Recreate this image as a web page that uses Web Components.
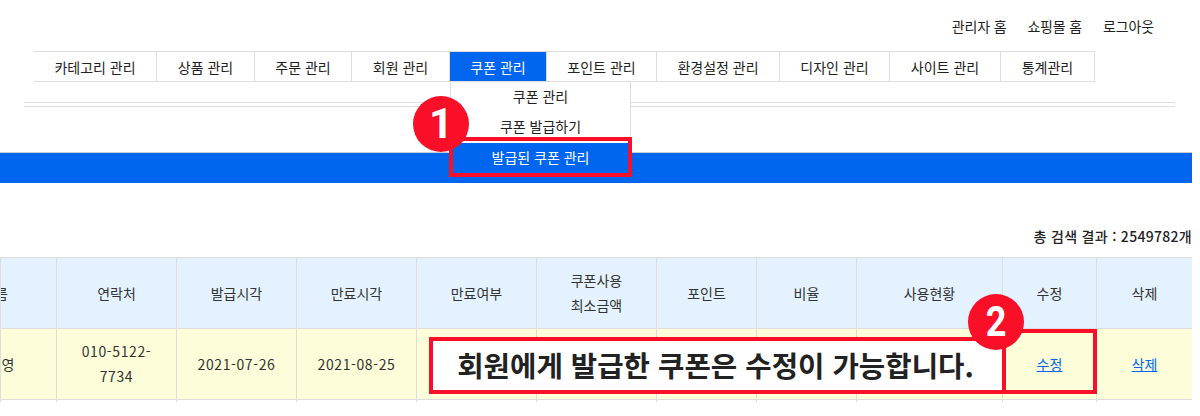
<!DOCTYPE html>
<html lang="ko">
<head>
<meta charset="utf-8">
<title>쿠폰 관리</title>
<style>
  html, body { margin: 0; background: #fff; }
  body { font-family: "Noto Sans CJK KR", "Noto Sans", sans-serif; font-size: 14px; color: #222; }
</style>
</head>
<body>
<admin-page>
  <top-links></top-links>
  <main-tabs></main-tabs>
  <double-rule></double-rule>
  <blue-bar></blue-bar>
  <result-count>총 검색 결과 : 2549782개</result-count>
  <coupon-table></coupon-table>
</admin-page>

<script>
class AdminPage extends HTMLElement {
  constructor() {
    super();
    const shadowRoot = this.attachShadow({ mode: 'open' });
    shadowRoot.innerHTML = `
      <style>
        :host {
          display: flex;
          flex-direction: column;
          position: relative;
          width: 1192px;
          height: 402px;
          overflow: hidden;
          background: #fff;
        }
        ::slotted(*) { flex: none; }
        .box {
          position: absolute;
          box-sizing: border-box;
          border: 4px solid #fa0f28;
        }
        .menu-box { left: 449px; top: 137px; width: 183px; height: 40px; }
        .edit-box { left: 1002px; top: 329px; width: 95px; height: 65px; }
        .note {
          left: 429px;
          top: 337px;
          width: 577px;
          height: 57px;
          padding-right: 4px;
          background: #fff;
          display: flex;
          align-items: center;
          justify-content: center;
          font-size: 28.7px;
          font-weight: 700;
          line-height: 1;
          color: #222;
          white-space: nowrap;
        }
        .badge {
          position: absolute;
          width: 56px;
          height: 56px;
          border-radius: 50%;
          background: #fa0f28;
          color: #fff;
          display: flex;
          align-items: center;
          justify-content: center;
          font-family: Roboto, "Noto Sans", sans-serif;
          font-size: 42px;
          font-weight: 700;
          line-height: 1;
        }
        .one { left: 413px; top: 96px; }
        .two { left: 968px; top: 294px; }
        .two span { transform: scaleX(.86); }
      </style>
      <slot></slot>
      <div class="box menu-box"></div>
      <div class="box edit-box"></div>
      <div class="box note">회원에게 발급한 쿠폰은 수정이 가능합니다.</div>
      <div class="badge one"><span>1</span></div>
      <div class="badge two"><span>2</span></div>
    `;
  }
}

class TopLinks extends HTMLElement {
  constructor() {
    super();
    const links = ['관리자 홈', '쇼핑몰 홈', '로그아웃'];
    const shadowRoot = this.attachShadow({ mode: 'open' });
    shadowRoot.innerHTML = `
      <style>
        :host {
          display: flex;
          justify-content: flex-end;
          gap: 21px;
          height: 51px;
          padding: 15px 38px 0 0;
          box-sizing: border-box;
          color: #222;
          font-size: 14px;
          letter-spacing: -.15px;
          line-height: 22px;
        }
      </style>
      ${links.map(t => `<span>${t}</span>`).join('')}
    `;
  }
}

class MainTabs extends HTMLElement {
  constructor() {
    super();
    this.items = [
      ['카테고리 관리', 123], ['상품 관리', 98], ['주문 관리', 97], ['회원 관리', 98], ['쿠폰 관리', 97],
      ['포인트 관리', 110], ['환경설정 관리', 123], ['디자인 관리', 110], ['사이트 관리', 111], ['통계관리', 94]
    ];
    const shadowRoot = this.attachShadow({ mode: 'open' });
    shadowRoot.innerHTML = `
      <style>
        :host {
          display: flex;
          height: 31px;
          padding-left: 34px;
          font-size: 14px;
          color: #222;
        }
        .tab {
          position: relative;
          box-sizing: border-box;
          height: 31px;
          border: 1px solid #ddd;
          border-left-width: 0;
          display: flex;
          align-items: center;
          justify-content: center;
          white-space: nowrap;
          background: #fff;
        }
        .tab:first-child { border-left-width: 1px; }
        .tab.on { background: #0066f0; color: #fff; }
        .drop {
          position: absolute;
          left: 0;
          top: 30px;
          width: 181px;
          box-sizing: border-box;
          padding-top: 1px;
          background: #fff;
          border-left: 1px solid #ddd;
          border-right: 1px solid #ddd;
          color: #222;
        }
        .drop div {
          box-sizing: border-box;
          height: 29.5px;
          padding-bottom: 3px;
          display: flex;
          align-items: center;
          justify-content: center;
        }
        .drop .sel {
          background: #0066f0;
          color: #fff;
          border-top: 1px solid #fff;
          border-bottom: 1px solid #ccd;
          height: 32px;
        }
      </style>
      ${this.items.map(([t, w]) => t === '쿠폰 관리'
        ? `<div class="tab on" style="width:${w}px">${t}
             <div class="drop"><div>쿠폰 관리</div><div>쿠폰 발급하기</div><div class="sel">발급된 쿠폰 관리</div></div>
           </div>`
        : `<div class="tab" style="width:${w}px">${t}</div>`).join('')}
    `;
  }
}

class DoubleRule extends HTMLElement {
  constructor() {
    super();
    const shadowRoot = this.attachShadow({ mode: 'open' });
    shadowRoot.innerHTML = `
      <style>
        :host {
          display: block;
          box-sizing: border-box;
          width: 1151px;
          height: 5px;
          margin: 20px 0 0 24px;
          border-top: 1px solid #ddd;
          border-bottom: 1px solid #ddd;
        }
      </style>
    `;
  }
}

class BlueBar extends HTMLElement {
  constructor() {
    super();
    const shadowRoot = this.attachShadow({ mode: 'open' });
    shadowRoot.innerHTML = `
      <style>
        :host {
          display: block;
          box-sizing: border-box;
          height: 31px;
          margin-top: 45px;
          background: #0066f0;
          border-top: 1px solid #ccc;
        }
      </style>
    `;
  }
}

class ResultCount extends HTMLElement {
  constructor() {
    super();
    const shadowRoot = this.attachShadow({ mode: 'open' });
    shadowRoot.innerHTML = `
      <style>
        :host {
          display: flex;
          justify-content: flex-end;
          height: 74px;
          padding-top: 42px;
          box-sizing: border-box;
          font-size: 14px;
          font-weight: 500;
          letter-spacing: .3px;
          line-height: 22px;
          color: #222;
          white-space: nowrap;
        }
      </style>
      <slot></slot>
    `;
  }
}

class CouponTable extends HTMLElement {
  constructor() {
    super();
    const widths = [56, 120, 120, 120, 120, 120, 100, 100, 146, 94, 96];
    const heads = ['이름', '연락처', '발급시각', '만료시각', '만료여부', '쿠폰사용<br>최소금액', '포인트', '비율', '사용현황', '수정', '삭제'];
    const cells = ['김준영', '010-5122-<br>7734', '2021-07-26', '2021-08-25', '', '', '', '', '', '<a href="#">수정</a>', '<a href="#">삭제</a>'];
    const shadowRoot = this.attachShadow({ mode: 'open' });
    shadowRoot.innerHTML = `
      <style>
        :host { display: block; }
        table {
          width: 1192px;
          table-layout: fixed;
          border-collapse: collapse;
          font-size: 14px;
          line-height: 25px;
          color: #333;
        }
        th, td {
          border: 1px solid #ddd;
          height: 71px;
          padding: 0;
          box-sizing: border-box;
          text-align: center;
          font-weight: 400;
          overflow: hidden;
        }
        th { background: #e3f2fe; }
        .row td { background: #fdfed9; }
        .cut { display: flex; justify-content: flex-end; white-space: nowrap; }
        th .cut { padding-right: 48px; }
        td .cut { padding-right: 41px; }
        .cut span { flex: none; }
        .date { letter-spacing: .6px; }
        a { color: #0066f0; letter-spacing: 0; }
      </style>
      <table>
        <colgroup>${widths.map(w => `<col style="width:${w}px">`).join('')}</colgroup>
        <tr>${heads.map((h, i) => `<th>${i ? h : `<div class="cut"><span>${h}</span></div>`}</th>`).join('')}</tr>
        <tr class="row">${cells.map((c, i) => `<td class="date">${i ? c : `<div class="cut"><span>${c}</span></div>`}</td>`).join('')}</tr>
        <tr>${widths.map(() => '<td></td>').join('')}</tr>
      </table>
    `;
  }
}

customElements.define('admin-page', AdminPage);
customElements.define('top-links', TopLinks);
customElements.define('main-tabs', MainTabs);
customElements.define('double-rule', DoubleRule);
customElements.define('blue-bar', BlueBar);
customElements.define('result-count', ResultCount);
customElements.define('coupon-table', CouponTable);
</script>
</body>
</html>
